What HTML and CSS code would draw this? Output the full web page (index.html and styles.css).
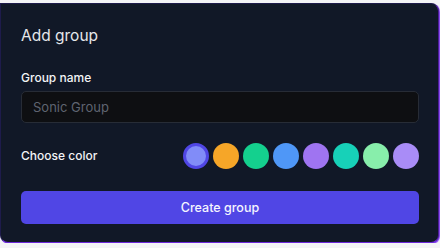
FILE: index.html
```html
<!DOCTYPE html>
<html lang="en">

<head>
	<title>Add group</title>
	<meta charset="utf-8">
	<link rel="stylesheet" href="styles.css">
</head>

<body>
	<div class="card">
		<h2 class="title">Add group</h2>

		<label class="label" for="group-name">Group name</label>
		<input id="group-name" class="input" type="text" placeholder="Sonic Group">

		<div class="color-row">
			<span class="label">Choose color</span>
			<div class="swatches">
				<span class="swatch selected" style="background: #818cf8"></span>
				<span class="swatch" style="background: #f6a628"></span>
				<span class="swatch" style="background: #14d08e"></span>
				<span class="swatch" style="background: #4f97f7"></span>
				<span class="swatch" style="background: #9f74f1"></span>
				<span class="swatch" style="background: #17d1b8"></span>
				<span class="swatch" style="background: #88eeab"></span>
				<span class="swatch" style="background: #a98cf7"></span>
			</div>
		</div>

		<button class="button">Create group</button>
	</div>
</body>
</html>
```

FILE: styles.css
```css
* {
	margin: 0;
	box-sizing: border-box;
}

body {
	font-family: 'Inter', sans-serif;
	margin: 0;
	padding: 3px 1px 0 0;
	background: #f4f4f6;
}

.card {
	display: flex;
	flex-direction: column;
	width: 439px;
	height: 240px;
	padding: 20px 19px 0 20px;
	background: #111827;
	border: 1px solid #1e1b4b;
	border-bottom-color: #6d28d9;
	border-right-color: #4c1d95;
	border-radius: 0 8px 8px 8px;
	box-shadow: 1px 1px 1px #7c3aed;
}

.title {
	font-size: 15.5px;
	font-weight: 400;
	line-height: 24px;
	color: #e5e7eb;
	margin-bottom: 21px;
}

.label {
	font-size: 12px;
	font-weight: 500;
	line-height: 18px;
	color: #f3f4f6;
}

.input {
	margin-top: 4px;
	height: 32px;
	padding: 0 11px;
	font-family: inherit;
	font-size: 13px;
	color: #e5e7eb;
	background: #0e0f12;
	border: 1px solid #272c36;
	border-radius: 5px;
	outline: none;
}

.input::placeholder {
	color: #5f6470;
}

.color-row {
	display: flex;
	align-items: center;
	justify-content: space-between;
	margin-top: 20px;
}

.swatches {
	display: flex;
	gap: 4px;
}

.swatch {
	width: 26px;
	height: 26px;
	border-radius: 50%;
}

.selected {
	border: 3px solid #5046e5;
}

.button {
	margin-top: 22px;
	height: 33px;
	font-family: inherit;
	font-size: 12.5px;
	font-weight: 500;
	color: #f5f5ff;
	background: #5046e5;
	border: none;
	border-radius: 5px;
}
```
